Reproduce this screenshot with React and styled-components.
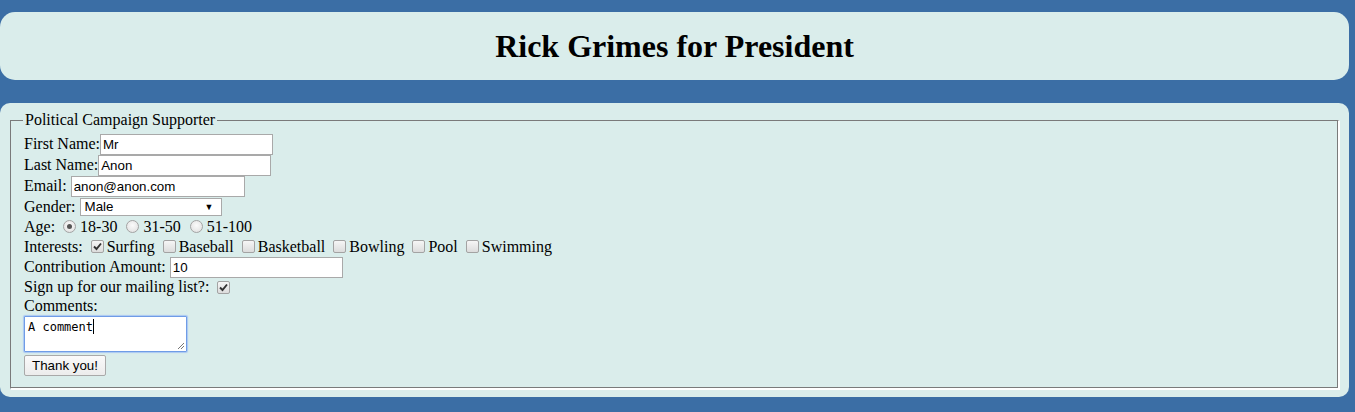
import React from "react";
import styled, { createGlobalStyle } from "styled-components";

const Global = createGlobalStyle`
  html, body { margin: 0; padding: 0; background: #3b6ea5; }
  body { font-family: "Liberation Serif", "Times New Roman", serif; font-size: 16px; color: #000; }
`;

const Page = styled.div`
  padding: 12px 6px 16px 0;
  display: flex;
  flex-direction: column;
  gap: 23px;
`;

const Header = styled.header`
  background: #daedeb;
  border-radius: 15px;
  height: 68px;
  display: flex;
  align-items: center;
  justify-content: center;
`;

const Title = styled.h1`
  margin: 0;
  font-size: 32px;
  font-weight: bold;
  line-height: 37px;
`;

const Panel = styled.section`
  background: #daedeb;
  border-radius: 10px;
  padding: 8px;
`;

const Fieldset = styled.fieldset`
  margin: 0 2px;
  padding: 4.6px 12px 12px 13px;
  border-style: solid;
  border-width: 1px;
  border-color: #7a7a7a #ffffff #ffffff #7a7a7a;
  box-shadow: inset -1px -1px 0 #7a7a7a, 1px 1px 0 #fff;
`;

const Legend = styled.legend`
  padding: 0 2px;
  margin-left: -1px;
`;

const Row = styled.div`
  line-height: 18px;
  min-height: ${(p) => p.$h || 18}px;
  display: flex;
  align-items: center;
  white-space: pre;
`;

const TextInput = styled.input`
  font-family: "Liberation Sans", Arial, sans-serif;
  font-size: 13.33px;
  width: ${(p) => p.$w || 173}px;
  height: 21px;
  box-sizing: border-box;
  border: 1px solid #a9a9a9;
  padding: 1px 2px;
  background: #fff;
  color: #000;
  margin: 0;
  outline: none;
`;

const Select = styled.div`
  font-family: "Liberation Sans", Arial, sans-serif;
  font-size: 13.33px;
  width: 142px;
  height: 18px;
  box-sizing: border-box;
  border: 1px solid #a9a9a9;
  background: #fff;
  padding: 0 4px;
  display: flex;
  align-items: center;
  justify-content: space-between;
  line-height: 16px;
`;

const Caret = styled.span`
  font-size: 9px;
  margin-right: 3px;
`;

const Radio = styled.span`
  display: inline-block;
  width: 11px;
  height: 11px;
  border-radius: 50%;
  border: 1px solid #a3a3a3;
  background: radial-gradient(circle at 50% 40%, #fafafa, #dedede);
  margin: 0 4px 0 ${(p) => p.$ml}px;
  position: relative;
  flex: none;
  &::after {
    content: "";
    display: ${(p) => (p.$on ? "block" : "none")};
    position: absolute;
    left: 3px;
    top: 3px;
    width: 5px;
    height: 5px;
    border-radius: 50%;
    background: #555;
  }
`;

const Check = styled.span`
  display: inline-block;
  width: 11px;
  height: 11px;
  border-radius: 2px;
  border: 1px solid #a3a3a3;
  background: linear-gradient(#f6f6f6, #dcdcdc);
  margin: 0 3px 0 ${(p) => p.$ml}px;
  position: relative;
  flex: none;
  svg { position: absolute; left: 1px; top: 1px; }
`;

const TextArea = styled.div`
  font-family: "DejaVu Sans Mono", "Liberation Mono", monospace;
  font-size: 12px;
  width: 163px;
  height: 36px;
  box-sizing: border-box;
  border: 1px solid #6f9ce6;
  box-shadow: 0 0 1px 1px #a9c7f3;
  border-radius: 1px;
  background: #fff;
  padding: 2px 3px;
  position: relative;
  line-height: 16px;
  margin: 1px 0 3px;
`;

const Cursor = styled.span`
  display: inline-block;
  width: 1px;
  height: 15px;
  background: #000;
  vertical-align: -3px;
`;

const Grip = styled.svg`
  position: absolute;
  right: 1px;
  bottom: 1px;
`;

const Button = styled.button`
  font-family: "Liberation Sans", Arial, sans-serif;
  font-size: 13.33px;
  height: 21px;
  width: 82px;
  box-sizing: border-box;
  border: 1px solid #a9a9a9;
  border-radius: 2px;
  background: linear-gradient(#fafafa, #ececec);
  color: #000;
  padding: 0 6px;
  margin: 0;
`;

const CheckMark = () => (
  <svg width="9" height="9" viewBox="0 0 9 9">
    <path d="M1 4.5 L3.5 7 L8 1.5" stroke="#333" strokeWidth="1.9" fill="none" />
  </svg>
);

const Box = ({ on, ml = 4 }) => <Check $ml={ml}>{on && <CheckMark />}</Check>;

export default function App() {
  const interests = ["Baseball", "Basketball", "Bowling", "Pool", "Swimming"];
  return (
    <>
      <Global />
      <Page>
        <Header>
          <Title>Rick Grimes for President</Title>
        </Header>
        <Panel>
          <Fieldset>
            <Legend>Political Campaign Supporter</Legend>
            <Row $h={21}>First Name:<TextInput defaultValue="Mr" /></Row>
            <Row $h={21}>Last Name:<TextInput defaultValue="Anon" /></Row>
            <Row $h={21}>Email: <TextInput $w={174} defaultValue="anon@anon.com" /></Row>
            <Row $h={20}>Gender: <Select>Male<Caret>▼</Caret></Select></Row>
            <Row $h={20}>
              Age: <Radio $on $ml={4} />18-30 <Radio $ml={5} />31-50 <Radio $ml={5} />51-100
            </Row>
            <Row $h={20}>
              Interests: <Box on ml={4} />Surfing
              {interests.map((i) => (
                <React.Fragment key={i}> <Box ml={4} />{i}</React.Fragment>
              ))}
            </Row>
            <Row $h={21}>Contribution Amount: <TextInput defaultValue="10" /></Row>
            <Row $h={19}>Sign up for our mailing list?: <Box on ml={4} /></Row>
            <Row $h={18}>Comments:</Row>
            <TextArea>
              A comment<Cursor />
              <Grip width="9" height="9" viewBox="0 0 9 9">
                <path d="M8 2 L2 8 M8 5 L5 8" stroke="#777" strokeWidth="1" />
              </Grip>
            </TextArea>
            <Button>Thank you!</Button>
          </Fieldset>
        </Panel>
      </Page>
    </>
  );
}
